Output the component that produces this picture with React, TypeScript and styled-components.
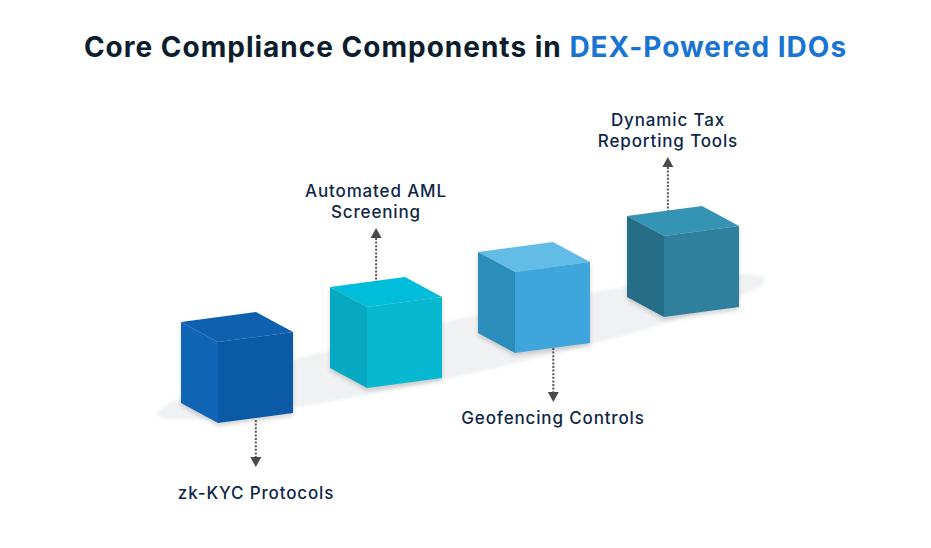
import styled, { createGlobalStyle } from 'styled-components';

const GlobalStyle = createGlobalStyle`
  html, body {
    margin: 0;
    padding: 0;
    background: #ffffff;
  }
  body {
    font-family: Inter, "Noto Sans", sans-serif;
  }
`;

// stage starts under the title, data below is in page coordinates
const STAGE_TOP = 66;

type Face = { top: string; left: string; front: string };

type Step = {
  id: string;
  x: number;
  y: number;
  colors: Face;
  lines: string[];
  dir: 'up' | 'down';
  arrowX: number;
  calloutY: number;
  arrowLen: number;
  gap: number;
};

const steps: Step[] = [
  {
    id: 'kyc',
    x: 181,
    y: 322,
    colors: { top: '#1060b0', left: '#1065b6', front: '#0b5aa6' },
    lines: ['zk-KYC Protocols'],
    dir: 'down',
    arrowX: 256,
    calloutY: 420,
    arrowLen: 47,
    gap: 16,
  },
  {
    id: 'aml',
    x: 330,
    y: 287,
    colors: { top: '#00bdda', left: '#07a8c1', front: '#08b7d0' },
    lines: ['Automated AML', 'Screening'],
    dir: 'up',
    arrowX: 376,
    calloutY: 181,
    arrowLen: 54,
    gap: 5,
  },
  {
    id: 'geo',
    x: 478,
    y: 252,
    colors: { top: '#63bce5', left: '#2b8dbb', front: '#3ea6dd' },
    lines: ['Geofencing Controls'],
    dir: 'down',
    arrowX: 553,
    calloutY: 348,
    arrowLen: 54,
    gap: 6,
  },
  {
    id: 'tax',
    x: 627,
    y: 216,
    colors: { top: '#3594b4', left: '#266d87', front: '#2f809d' },
    lines: ['Dynamic Tax', 'Reporting Tools'],
    dir: 'up',
    arrowX: 668,
    calloutY: 110,
    arrowLen: 54,
    gap: 5,
  },
];

const Page = styled.div`
  width: 931px;
  height: 548px;
  display: flex;
  flex-direction: column;
  overflow: hidden;
`;

const Title = styled.h1`
  margin: 0;
  padding-top: 28px;
  height: 38px;
  font-size: 28px;
  line-height: 38px;
  font-weight: 700;
  color: #0c1d2d;
  text-align: center;
  letter-spacing: 1px;
`;

const Highlight = styled.span`
  color: #1a74d3;
`;

const Stage = styled.div`
  position: relative;
  flex: 1;
`;

const Backdrop = styled.div`
  position: absolute;
  left: 150px;
  top: ${347 - 28 - STAGE_TOP}px;
  width: 622px;
  height: 56px;
  border-radius: 50%;
  background: #f0f1f3;
  transform: rotate(-12.5deg);
  filter: blur(1.5px);
`;

const CubeBox = styled.svg<{ $x: number; $y: number }>`
  position: absolute;
  left: ${(p) => p.$x}px;
  top: ${(p) => p.$y - 10 - STAGE_TOP}px;
  overflow: visible;
  filter: drop-shadow(0 3px 2px rgba(0, 0, 0, 0.16));
`;

const Callout = styled.div<{ $x: number; $y: number; $dir: 'up' | 'down'; $gap: number }>`
  position: absolute;
  left: ${(p) => p.$x}px;
  top: ${(p) => p.$y - STAGE_TOP}px;
  transform: translateX(-50%);
  display: flex;
  flex-direction: ${(p) => (p.$dir === 'up' ? 'column' : 'column-reverse')};
  justify-content: flex-end;
  align-items: center;
  gap: ${(p) => p.$gap}px;
`;

const Label = styled.div`
  font-size: 17px;
  line-height: 21px;
  font-weight: 500;
  letter-spacing: 0.85px;
  color: #0f2747;
  text-align: center;
  white-space: nowrap;
`;

function Cube({ x, y, colors }: { x: number; y: number; colors: Face }) {
  return (
    <CubeBox $x={x} $y={y} width="112" height="111" viewBox="0 -10 112 111">
      <polygon points="0,0 75,-10 112,10 37,20" fill={colors.top} />
      <polygon points="0,0 37,20 37,101 0,81" fill={colors.left} />
      <polygon points="37,20 112,10 112,91 37,101" fill={colors.front} />
    </CubeBox>
  );
}

function Arrow({ dir, length }: { dir: 'up' | 'down'; length: number }) {
  const head = 10;
  const up = dir === 'up';
  return (
    <svg width="12" height={length} viewBox={`0 0 12 ${length}`}>
      <line
        x1="6"
        x2="6"
        y1={up ? head : 0}
        y2={up ? length : length - head}
        stroke="#555555"
        strokeWidth="2"
        strokeDasharray="2 1.6"
      />
      {up ? (
        <polygon points={`0.5,${head} 11.5,${head} 6,0`} fill="#4a4a4a" />
      ) : (
        <polygon points={`0.5,${length - head} 11.5,${length - head} 6,${length}`} fill="#4a4a4a" />
      )}
    </svg>
  );
}

export default function App() {
  return (
    <>
      <GlobalStyle />
      <Page>
        <Title>
          Core Compliance Components in <Highlight>DEX-Powered IDOs</Highlight>
        </Title>
        <Stage>
          <Backdrop />
          {steps.map((s) => (
            <Cube key={s.id} x={s.x} y={s.y} colors={s.colors} />
          ))}
          {steps.map((s) => (
            <Callout key={s.id + '-c'} $x={s.arrowX} $y={s.calloutY} $dir={s.dir} $gap={s.gap}>
              <Label>
                {s.lines.map((l) => (
                  <div key={l}>{l}</div>
                ))}
              </Label>
              <Arrow dir={s.dir} length={s.arrowLen} />
            </Callout>
          ))}
        </Stage>
      </Page>
    </>
  );
}
